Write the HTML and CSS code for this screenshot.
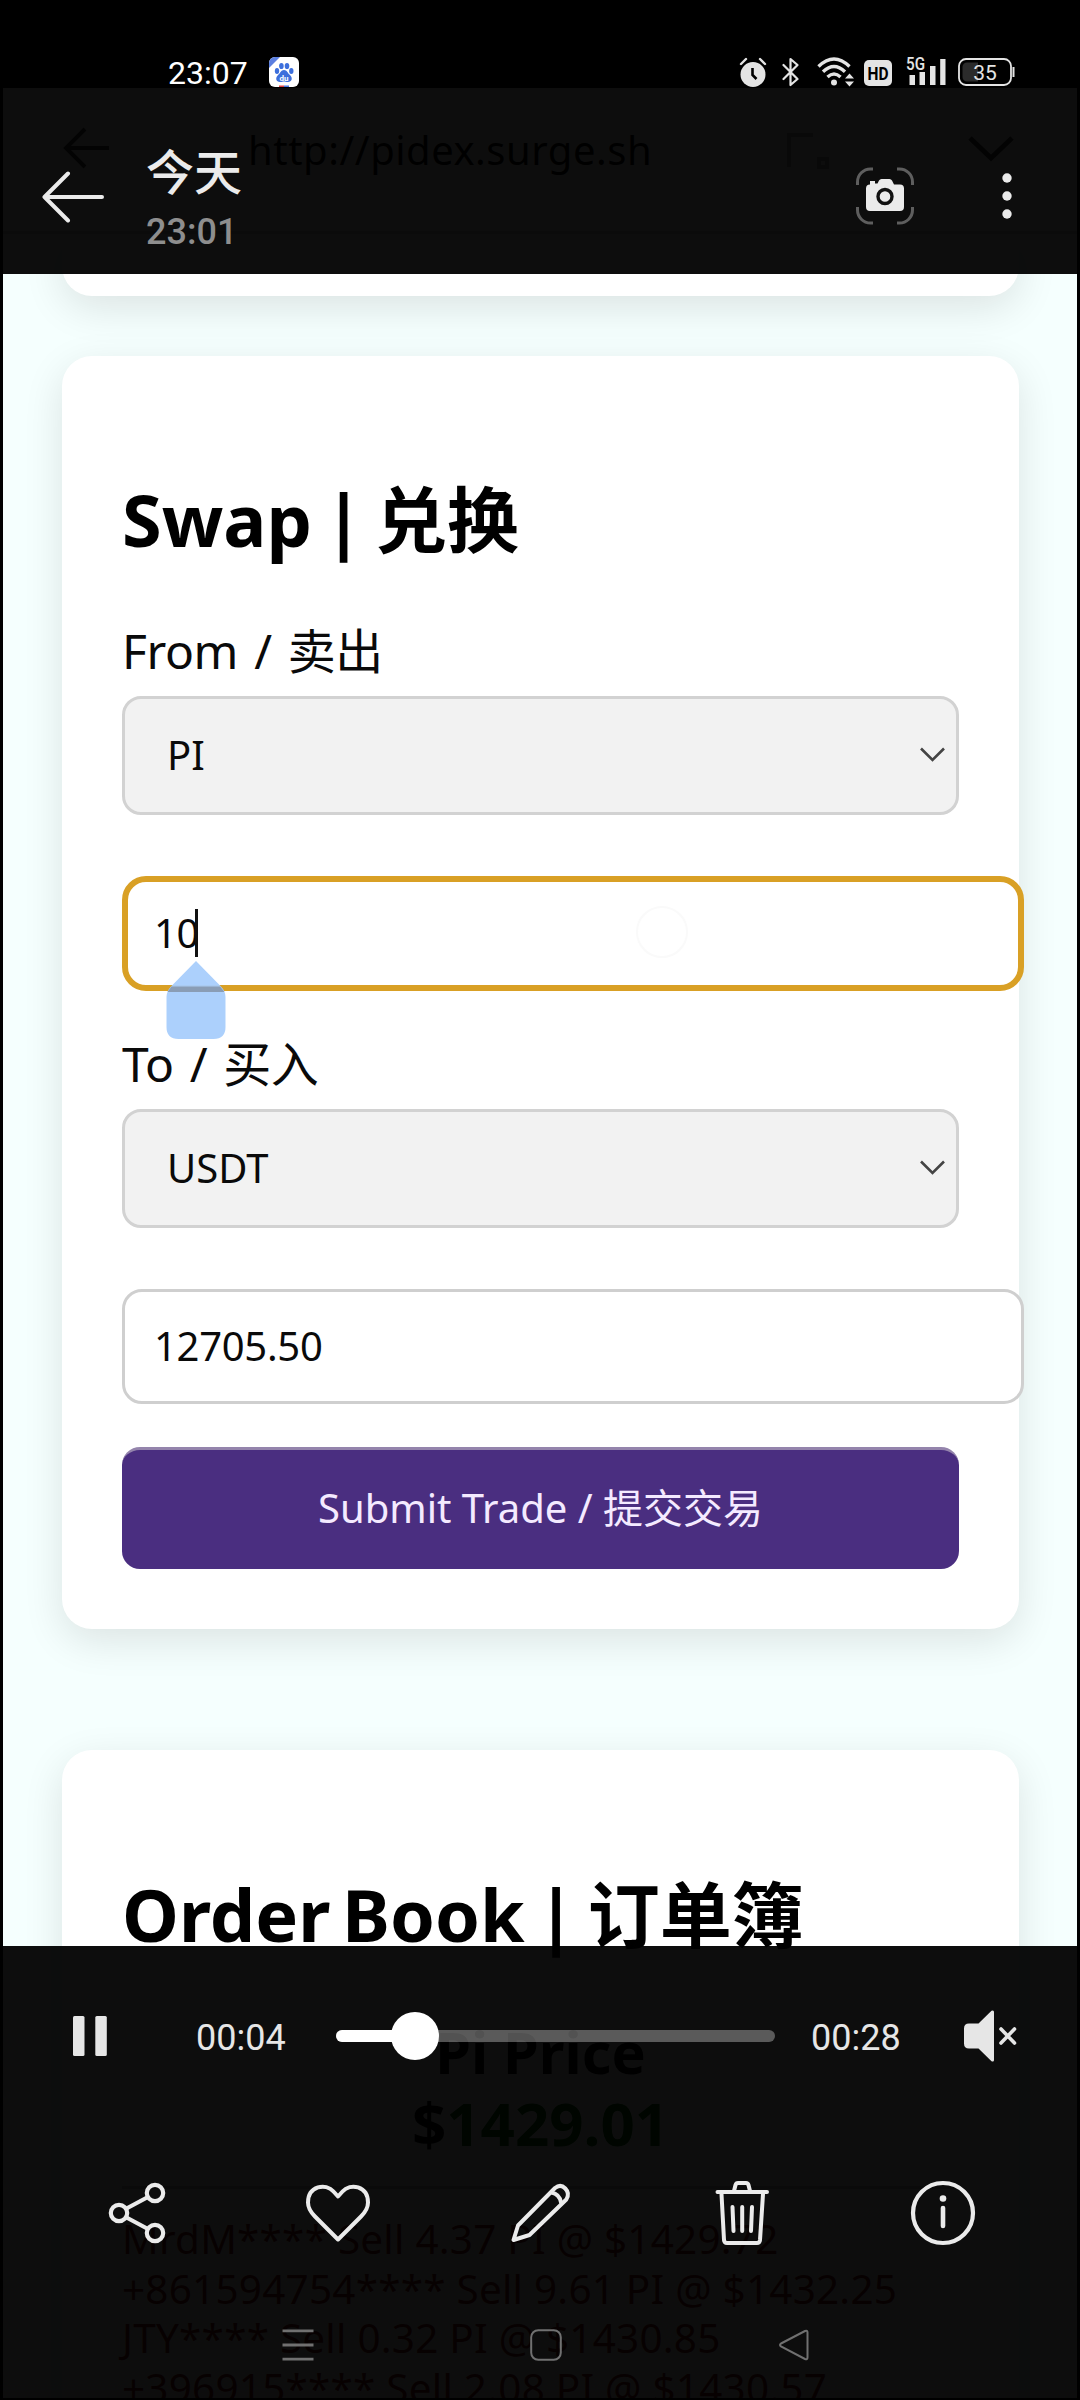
FILE: index.html
```html
<!DOCTYPE html>
<html lang="zh-CN">
<head>
<meta charset="utf-8">
<title>今天 23:01</title>
<link rel="stylesheet" href="styles.css">
</head>
<body>
<div class="screen">
  <div class="status">
    <span class="clock">23:07</span>
    <svg class="app-icon" width="30" height="30" viewBox="0 0 30 30">
      <defs><clipPath id="tile"><rect width="30" height="30" rx="6"/></clipPath></defs>
      <g clip-path="url(#tile)">
        <rect width="30" height="30" fill="#fff"/>
        <path d="M0 0h11L0 11z" fill="#5b7fe0"/>
        <g fill="#3d6fdc">
          <ellipse cx="8" cy="14" rx="2.2" ry="3"/><ellipse cx="12.4" cy="9" rx="2.3" ry="3.1"/>
          <ellipse cx="18" cy="9" rx="2.3" ry="3.1"/><ellipse cx="22.3" cy="14" rx="2.2" ry="3"/>
          <path d="M15 13c3 0 3.5 3 6 5 3 3 2 7-2 7-2 0-3-.5-4-.5s-2 .5-4 .5c-4 0-5-4-2-7 2.500-2 3-5 6-5z"/>
        </g>
        <text x="15" y="23.500" text-anchor="middle" class="app-mark">du</text>
        <path d="M10 28.500h5V30h-5z" fill="#e04444"/><path d="M15 28.500h5V30h-5z" fill="#4a78e0"/>
      </g>
    </svg>
    <div class="status-right">
      <svg width="28" height="30" viewBox="0 0 28 30">
        <circle cx="14" cy="17.500" r="12.500" fill="#e4e4e4"/>
        <path d="M2 7l5-5M26 7l-5-5" stroke="#e4e4e4" stroke-width="2.400" stroke-linecap="round"/>
        <path d="M13.500 11v7l4 4" stroke="#000" stroke-width="2.600" fill="none"/>
      </svg>
      <svg class="bt" width="18" height="30" viewBox="0 0 18 30"><path d="M1.500 8l14 14-7 6V2l7 6-14 14" fill="none" stroke="#e4e4e4" stroke-width="2.200" stroke-linejoin="round" stroke-linecap="round"/></svg>
      <svg class="wifi" width="38" height="30" viewBox="0 0 38 30">
        <g fill="none" stroke="#e4e4e4" stroke-width="3.400">
          <path d="M1.500 9.500q15.500-15 31 0"/><path d="M6 14.800q11-10.500 22 0"/><path d="M10.500 20q6.500-6 13 0"/>
        </g>
        <circle cx="17" cy="25.500" r="3" fill="#e4e4e4"/>
        <path d="M32.500 16.500l4.500 5h-9zM32.500 29.500l4.500-5h-9z" fill="#e4e4e4"/>
      </svg>
      <svg class="hd" width="28" height="26" viewBox="0 0 28 26"><rect width="28" height="26" rx="5" fill="#e4e4e4"/><text x="14" y="20" text-anchor="middle" class="hd-text" textLength="21" lengthAdjust="spacingAndGlyphs">HD</text></svg>
      <svg class="signal" width="40" height="32" viewBox="0 0 40 32">
        <text x="0" y="15" class="net-text" textLength="19" lengthAdjust="spacingAndGlyphs">5G</text>
        <path d="M3.500 20h5.500v10H3.500zM13.500 17h5.500v13h-5.500zM24 11h5.500v19H24zM34.200 4h5.300v26h-5.300z" fill="#e4e4e4"/>
      </svg>
      <svg class="battery" width="58" height="28" viewBox="0 0 58 28">
        <rect x="1" y="1" width="52" height="26" rx="7" fill="none" stroke="#e4e4e4" stroke-width="1.800"/>
        <path d="M9 4.500h11v19H9a4.500 4.500 0 0 1-4.500-4.500V9A4.500 4.500 0 0 1 9 4.500z" fill="#2b2b2b"/>
        <path d="M55.500 9v10" stroke="#e4e4e4" stroke-width="2"/>
        <text x="27" y="21.500" text-anchor="middle" class="battery-text">35</text>
      </svg>
    </div>
  </div>

  <div class="browser">
    <div class="address">
      <svg class="address-back" width="48" height="42" viewBox="0 0 48 42"><path d="M22 2L3 21l19 19M3 21h43" fill="none" stroke="#444" stroke-width="4"/></svg>
      <span class="url">http://pidex.surge.sh</span>
      <svg class="address-tab" width="46" height="40" viewBox="0 0 46 40"><path d="M4 36V4h24M34 28h8v8h-8z" fill="none" stroke="#b4b4b4" stroke-width="4"/></svg>
      <svg class="address-more" width="46" height="26" viewBox="0 0 46 26"><path d="M2 2l21 20L44 2" fill="none" stroke="#444" stroke-width="5"/></svg>
    </div>
    <div class="page">
      <section class="card card-first"></section>
      <section class="card card-swap">
        <h2 class="heading">Swap | 兑换</h2>
        <div class="label">From / 卖出</div>
        <div class="select"><span>PI</span><svg width="26" height="16" viewBox="0 0 26 16"><path d="M1 1.500L12.500 13 24 1.500" fill="none" stroke="#444" stroke-width="2.600"/></svg></div>
        <div class="input input-focus"><span>10</span><i class="caret"></i><i class="tap"></i>
          <svg class="handle" width="60" height="79" viewBox="0 0 60 79"><path d="M30 0l24.500 25q5 5 5 11v30q0 12-12 12h-35q-12 0-12-12V36q0-6 5-11z" fill="#a8cefc" fill-opacity=".95"/><path d="M5.500 25.500H54l4.500 5.500H1.500z" fill="#8a9db5"/></svg>
        </div>
        <div class="label">To / 买入</div>
        <div class="select"><span>USDT</span><svg width="26" height="16" viewBox="0 0 26 16"><path d="M1 1.500L12.500 13 24 1.500" fill="none" stroke="#444" stroke-width="2.600"/></svg></div>
        <div class="input"><span>12705.50</span></div>
        <div class="submit">Submit Trade / 提交交易</div>
      </section>
      <section class="card card-book">
        <h2 class="heading">Order Book | 订单簿</h2>
        <div class="price">Pi Price<div class="price-line">$<span class="price-value">1429.01</span></div></div>
        <div class="orders">
          <div>MrdM**** Sell 4.37 PI @ $1429.72</div>
          <div>+861594754**** Sell 9.61 PI @ $1432.25</div>
          <div>JTY**** Sell 0.32 PI @ $1430.85</div>
          <div>+396915**** Sell 2.08 PI @ $1430.57</div>
        </div>
      </section>
    </div>
  </div>

  <header class="header">
    <svg class="back" width="62" height="52" viewBox="0 0 62 52"><path d="M26 2.500L2.500 26 26 49.500M2.500 26H60" fill="none" stroke="#ebebeb" stroke-width="4" stroke-linecap="round" stroke-linejoin="round"/></svg>
    <div class="title"><div class="day">今天</div><div class="time">23:01</div></div>
    <svg class="camera" width="58" height="58" viewBox="0 0 58 58">
      <path d="M1.500 18v-3A13 13 0 0 1 14.500 2H17M41 2h2.500a13 13 0 0 1 13 13v3M56.500 40v3a13 13 0 0 1-13 13H41M17 56h-2.500a13 13 0 0 1-13-13v-3" fill="none" stroke="#5e5e5e" stroke-width="3"/>
      <path d="M14 14h5v2.500h2.500l1.500-3q.8-1.500 2.500-1.500h8q1.700 0 2.500 1.500l2 4h6q4 0 4 4V40q0 4-4 4H14q-4 0-4-4V21.500q0-4 4-4z" fill="#ebebeb"/>
      <circle cx="29" cy="29.500" r="7" fill="none" stroke="#111" stroke-width="3.400"/>
    </svg>
    <svg class="more" width="10" height="48" viewBox="0 0 10 48"><g fill="#ebebeb"><circle cx="5" cy="6" r="4.700"/><circle cx="5" cy="24" r="4.700"/><circle cx="5" cy="42" r="4.700"/></g></svg>
  </header>

  <footer class="footer">
    <div class="player">
      <svg class="pause" width="34" height="40" viewBox="0 0 34 40"><g fill="#e6e6e6"><rect width="11.500" height="40" rx="1.500"/><rect x="22.300" width="11.500" height="40" rx="1.500"/></g></svg>
      <span class="stamp stamp-now">00:04</span>
      <div class="track"><div class="played" style="width:79px"></div><i class="knob"></i></div>
      <span class="stamp stamp-total">00:28</span>
      <svg class="mute" width="54" height="52" viewBox="0 0 54 52"><path d="M5 13.500h9.500L27.500.800q2.500-1 2.500 1.200v48q0 2.200-2.500 1.200L14.500 38.500H5q-5 0-5-5v-15q0-5 5-5z" fill="#e6e6e6"/><path d="M37 19L50.500 33M50.500 19L37 33" stroke="#e6e6e6" stroke-width="3.600" stroke-linecap="round"/></svg>
    </div>
    <div class="tools">
      <svg width="66" height="66" viewBox="0 0 66 66"><g fill="none" stroke="#ebebeb" stroke-width="4.200"><circle cx="15" cy="33" r="8.200"/><circle cx="51" cy="13" r="8.200"/><circle cx="51" cy="53" r="8.200"/><path d="M22.500 28.500L44 17M22.500 37.500L44 49"/></g></svg>
      <svg width="66" height="66" viewBox="0 0 66 66"><path d="M33 16.500L28.500 11.500C21 2.500 3 6 3 22.500c0 6 3 10 7 14L33 59.500l23-23c4-4 7-8 7-14C63 6 45 2.500 37.500 11.500z" fill="none" stroke="#ebebeb" stroke-width="4" stroke-linejoin="round"/></svg>
      <svg width="66" height="66" viewBox="0 0 66 66"><g fill="none" stroke="#ebebeb" stroke-width="4" stroke-linejoin="round" stroke-linecap="round"><path d="M6.500 60l4.500-14.500L48 8q5.500-4.500 10.300.5t1 11L22.500 55z"/><path d="M44.500 12.500q8 1.500 9.500 10"/></g></svg>
      <svg width="66" height="66" viewBox="0 0 66 66"><g fill="none" stroke="#ebebeb" stroke-width="4" stroke-linecap="round" stroke-linejoin="round"><path d="M8.500 12H58M12.500 14l2.500 46q.3 3 3 3h30q2.700 0 3-3l3-46M25 11l1.500-6q.6-2 2.500-2h8q2 0 2.500 2L41 11"/><path d="M23.500 27l1 24M33.200 27v24M43 27l-1 24"/></g></svg>
      <svg width="66" height="66" viewBox="0 0 66 66"><circle cx="33" cy="33" r="30" fill="none" stroke="#ebebeb" stroke-width="4.200"/><circle cx="33" cy="18.500" r="3.300" fill="#ebebeb"/><path d="M33 28v18" stroke="#ebebeb" stroke-width="4.600" stroke-linecap="round"/></svg>
    </div>
    <nav class="nav">
      <svg width="32" height="32" viewBox="0 0 32 32"><path d="M.5 1.800h31M.5 16h31M.5 30.200h31" stroke="#707070" stroke-width="2.800"/></svg>
      <svg width="32" height="32" viewBox="0 0 32 32"><rect x="1.200" y="1.200" width="29.600" height="29.600" rx="7" fill="none" stroke="#707070" stroke-width="2"/></svg>
      <svg width="32" height="32" viewBox="0 0 32 32"><path d="M3 14.500L27 2q2.500-1 2.500 1.500v25q0 2.500-2.500 1.500L3 17.500q-2-1.500 0-3z" fill="none" stroke="#707070" stroke-width="2"/></svg>
    </nav>
  </footer>
</div>
</body>
</html>
```
FILE: styles.css
```css
* { box-sizing: border-box; }
body { margin: 0; background: #000; }
svg { display: block; flex: none; }
.screen { position: relative; width: 1080px; height: 2400px; overflow: hidden; background: #000; font-family: "Noto Sans", "Noto Sans CJK SC", sans-serif; color: #0a0a0a; }

.status { height: 88px; padding: 56px 64px 0 168px; display: flex; align-items: flex-start; }
.clock { width: 101px; padding-top: 1px; font: 400 32px/32px Roboto, sans-serif; color: #fff; }
.app-icon { margin-top: 1px; }
.app-mark { font: bold 8px Roboto, sans-serif; fill: #fff; }
.status-right { margin-left: auto; display: flex; align-items: flex-start; padding-top: 1px; }
.bt { margin-left: 15px; }
.wifi { margin-left: 17px; }
.hd { margin: 3px 0 0 9px; }
.hd-text { font: bold 19px Roboto, sans-serif; fill: #000; }
.signal { margin: -2px 0 0 14px; }
.net-text { font: 500 18px Roboto, sans-serif; fill: #e4e4e4; }
.battery { margin: 1px 0 0 12px; }
.battery-text { font: 400 21px Roboto, sans-serif; fill: #e4e4e4; }

.browser { width: 1074px; height: 2310px; margin-left: 3px; overflow: hidden; background: #f5fffe; }
.address { height: 146px; padding: 39px 63px 0 60px; display: flex; background: #fff; border-bottom: 3px solid #d8d8d8; }
.url { margin-left: 137px; font-size: 40px; line-height: 46px; letter-spacing: .5px; white-space: nowrap; }
.address-tab { margin: 4px 0 0 auto; }
.address-more { margin: 9px 0 0 137px; }

.page { padding: 0 58px 0 59px; }
.card { padding: 0 60px; border-radius: 30px; background: #fff; box-shadow: 0 12px 40px rgba(20, 0, 0, .11); }
.card-first { height: 62px; border-radius: 0 0 30px 30px; }
.card-swap { height: 1273px; margin-top: 60px; padding-top: 121px; }
.card-book { height: 900px; margin-top: 121px; padding-top: 122px; }
.heading { margin: 0; font-size: 72px; line-height: 84px; font-weight: 700; word-spacing: -7px; color: #000; white-space: nowrap; }
.label { height: 60px; margin-bottom: 15px; font-size: 48px; line-height: 60px; letter-spacing: -.4px; word-spacing: 4px; white-space: nowrap; }
.heading + .label { margin-top: 60px; }
.select { height: 119px; margin-bottom: 61px; padding: 0 10px 2px 42px; display: flex; align-items: center; justify-content: space-between; border: 3px solid #d2d2d2; border-radius: 19px; background: #f2f2f2; font-size: 40px; }
.input { position: relative; width: 902px; height: 115px; margin-bottom: 43px; padding: 0 0 2px 29px; display: flex; align-items: center; border: 3px solid #cfcfcf; border-radius: 20px; background: #fff; font-size: 40px; line-height: 54px; letter-spacing: -.3px; }
.input-focus { padding-left: 26px; border: 6px solid #d9a025; border-radius: 24px; }
.caret { width: 3px; height: 48px; margin-left: -4px; background: #111; }
.tap { position: absolute; left: 508px; top: 24px; width: 52px; height: 52px; border: 2px solid #fafafa; border-radius: 50%; }
.handle { position: absolute; left: 38px; top: 79px; }
.submit { height: 122px; border-top: 3px solid #9484ac; border-radius: 18px; background: #4a2e80; color: #f4eaff; font-size: 40px; line-height: 116px; text-align: center; white-space: nowrap; }
.price { margin-top: 61px; font-size: 57.500px; line-height: 71px; font-weight: 700; text-align: center; }
.price-line { font-size: 60px; }
.price-value { color: #006400; }
.orders { margin-top: 27px; padding-top: 25px; border-top: 3px solid #bbb; font-size: 40.500px; line-height: 49.500px; letter-spacing: .2px; color: #8c1c1c; white-space: nowrap; }

.header { position: absolute; left: 0; top: 88px; width: 1080px; height: 186px; padding-left: 42px; display: flex; align-items: flex-start; background: rgba(0, 0, 0, .95); }
.back { margin-top: 83px; }
.title { width: 200px; margin: 51px 0 0 42px; }
.day { font: 500 48px/60px "Noto Sans CJK SC", sans-serif; color: #ebebeb; }
.time { margin-top: 11px; font: 500 36px/44px Roboto, sans-serif; color: #8e8e8e; }
.camera { margin: 79px 0 0 510px; }
.more { margin: 84px 0 0 88px; }

.footer { position: absolute; left: 0; top: 1946px; width: 1080px; height: 454px; background: rgba(0, 0, 0, .95); }
.player { height: 180px; padding: 0 62px 0 73px; display: flex; align-items: center; }
.stamp { width: 139px; font: 400 36px/44px Roboto, sans-serif; color: #e6e6e6; padding-top: 4px; }
.stamp-now { margin-left: 89px; width: 140px; }
.track { position: relative; width: 439px; height: 12px; border-radius: 6px; background: rgba(255, 255, 255, .32); }
.played { height: 12px; border-radius: 6px 0 0 6px; background: #fff; }
.knob { position: absolute; left: 55px; top: -18px; width: 48px; height: 48px; border-radius: 50%; background: #fff; }
.stamp-total { margin-left: 36px; width: 153px; }
.tools { height: 174px; padding: 0 36px; display: grid; grid-template-columns: repeat(5, 1fr); align-items: center; justify-items: center; }
.nav { height: 90px; padding: 0 161px 0 174px; display: grid; grid-template-columns: repeat(3, 248px); align-items: center; justify-items: center; }
```
